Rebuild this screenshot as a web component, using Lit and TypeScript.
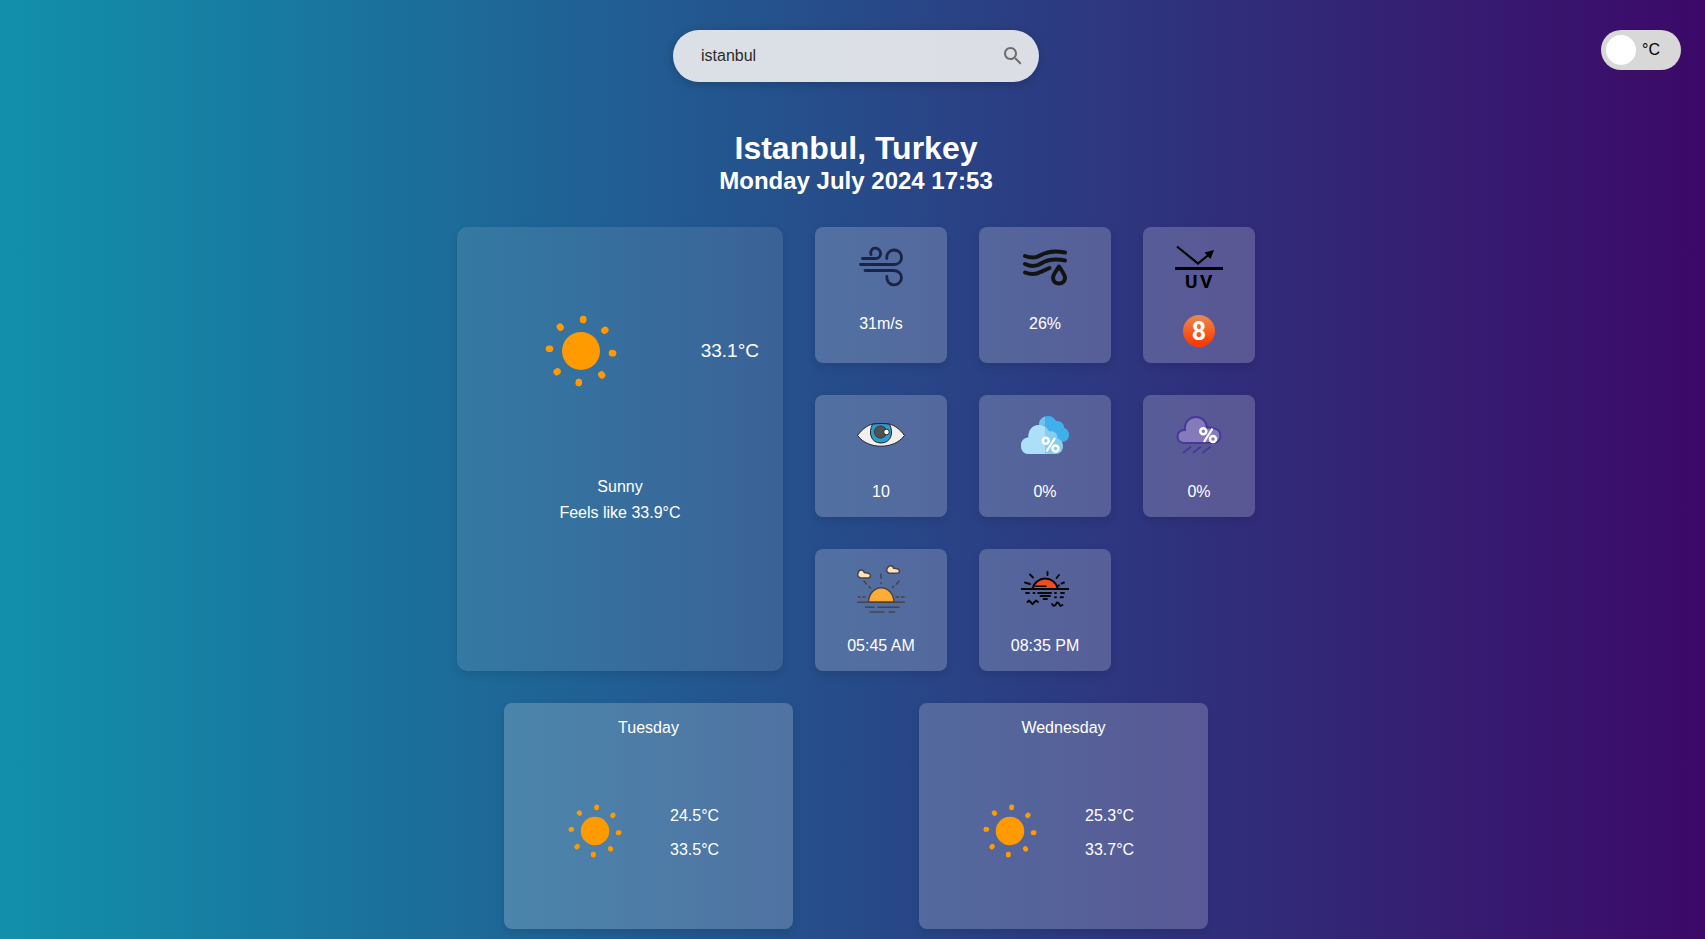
import { LitElement, html, svg, css } from "lit";
import { customElement, state } from "lit/decorators.js";

const degrees = (c: number, fahrenheit: boolean) =>
  fahrenheit ? `${(c * 1.8 + 32).toFixed(1)}°F` : `${c.toFixed(1)}°C`;

const rays = [4, 49, 94, 139, 184, 229, 274, 319];

const sun = html`<svg class="sun" viewBox="0 0 72 72" aria-hidden="true">
  <circle cx="36" cy="36" r="19" fill="#ff9a00" />
  ${rays.map(
    (a) => svg`<line x1="36" y1="3.900" x2="36" y2="4.900" transform="rotate(${a} 36 36)"
      stroke="#ff9a00" stroke-width="6.600" stroke-linecap="round" />`
  )}
</svg>`;

const wind = html`<svg viewBox="0 0 48 48" fill="none" stroke="#1b2346" stroke-width="2.800" stroke-linecap="round" aria-hidden="true">
  <path d="M5.500 15.500H18.500C25 15.500 25.500 6 18.500 5.200C15 5 13 8 14 11.500" />
  <path d="M3.500 21.500H37C41.500 21.500 44.500 18.500 44.500 14.500C44.500 10 41.200 7 37 7C32.500 7 29.500 10.500 29.800 15.500" />
  <path d="M8 27.500H37C41.500 27.500 44.500 31 44.500 34.500C44.500 38.500 41 41.800 37 41.800C32.500 41.800 29.500 38.500 29.800 33.500" />
</svg>`;

const humidity = html`<svg viewBox="0 0 48 48" fill="none" stroke="#131313" stroke-width="4" stroke-linecap="round" stroke-linejoin="round" aria-hidden="true">
  <path d="M4 13C9 15 14.500 15.500 20 12C27 8 34 7.300 44 9.500" />
  <path d="M4 21C9 23.500 14.500 24 20 20.500C27 16 34 15.300 44 17.500" />
  <path d="M4 29.500C9 31.500 14.500 32 20 28.800L28.500 25" />
  <path d="M38 23.500C35 28 32 31.500 32 34.800C32 38.300 34.600 40.500 38 40.500C41.400 40.500 44 38.300 44 34.800C44 31.500 41 28 38 23.500Z" />
</svg>`;

const uv = html`<svg viewBox="0 0 48 48" fill="none" stroke="#000" aria-hidden="true">
  <path d="M2 3.500L23 20.500L34 11.500" stroke-width="2.200" />
  <path d="M39 7L29.500 9.500L35.500 16Z" fill="#000" stroke="none" />
  <path d="M0 25.500H48" stroke-width="3" />
  <text class="uv-text" x="10" y="45">U</text>
  <text class="uv-text" x="25" y="45">V</text>
</svg>`;

const eye = html`<svg viewBox="0 0 48 48" stroke="#23262b" stroke-width="1" aria-hidden="true">
  <path d="M0.600 24.500C5 18 11 14 16 13C21 12.300 27 12.300 32 13C37 14 43 18 47.400 24.500C42 32 33 35.200 24 35.200C15 35.200 6 32 0.600 24.500Z" fill="#f3efef" />
  <path d="M15.500 13.200C11 22 14 32 24 32C34 32 37 22 32.500 13.200C27 12.300 21 12.300 15.500 13.200Z" fill="#2c9ccb" />
  <circle cx="23.500" cy="21" r="6.200" fill="#55504f" stroke-width="0.600" />
  <circle cx="29.500" cy="21" r="2.800" fill="#fff" />
</svg>`;

const percent = (x: number, y: number) => svg`<g transform="translate(${x} ${y})" fill="none" stroke="#fff">
  <circle cx="4.300" cy="4.300" r="3" stroke-width="2.500" />
  <circle cx="14" cy="12" r="3" stroke-width="2.500" />
  <path d="M13.500 1.500L5 15" stroke-width="2.200" />
</g>`;

const clouds = html`<svg viewBox="0 0 48 48" aria-hidden="true">
  <path d="M18 14C18 8.500 22 5 27 5C31 5 33.500 7 35 10C39.500 9.500 43.500 12.500 43.200 17C46.500 18 48 21 48 24C48 28 45 31 41 31H24Z" fill="#40b0ea" />
  <path d="M24 5.600C20.500 6.800 18 9.800 18 14H24Z" fill="#6fc3ee" />
  <path d="M8 43C3 43 0 39.500 0 34.500C0 30 3 27 7.500 26.500C7 19 11.500 14 18 14C23 14 26.500 16.500 28 20.500C33 19 37 22.500 36.500 27.500C40 28.500 42 31.500 42 35C42 40 39 43 34.500 43Z" fill="#87ccf1" />
  <path d="M8 43C3 43 0 39.500 0 34.500C0 30 3 27 7.500 26.500C7 19 11.500 14 18 14C20.500 14 22.500 14.600 24 15.600V43Z" fill="#acdff8" />
  ${percent(20.5, 25.5)}
</svg>`;

const rain = html`<svg viewBox="0 0 48 48" aria-hidden="true">
  <path d="M10 32C5 32 2.500 29 2.500 25.500C2.500 21.500 5.500 19 10 19C9 12 14 6 21 6C27 6 31.500 10.500 32 17C34 16 36 16.500 37.500 17.300C42.500 17.500 45.500 20.500 45.500 25C45.500 29 42.500 32 38 32Z" fill="#857bbb" stroke="#46379b" stroke-width="2" />
  <path d="M8.500 41.500L15.500 36M18.500 41.500L25.500 36M28 41.500L35 36" stroke="#46379b" stroke-width="1.800" stroke-linecap="round" />
  ${percent(24, 16)}
</svg>`;

const sunrise = html`<svg viewBox="0 0 48 48" fill="none" stroke="#454446" stroke-width="1.500" stroke-linecap="round" stroke-linejoin="round" aria-hidden="true">
  <path d="M11.500 37.300A12.700 14.500 0 0 1 37 37.300Z" fill="#fdad35" />
  <path d="M0.700 37.300H47.300M8.500 42.200H17M21 42.200H42M13 47H27M32 47H37.500" />
  <path d="M1.500 32H3M6 32H8M39 32H41.500M44.500 32H47M24 9V13M24 17.500V18.500M7 16L9.500 19M12 21.500L13.500 23M42 16L39.500 19M37 21L35.500 22.500" />
  <path d="M3.500 12.800C0.300 12.300 0 9 1.500 7.500C1.500 4.500 6 4 7.500 7.800C10 7.500 13.500 8.500 13.500 10.500C13.500 12 12.500 13 11 13Z" fill="#fee2bd" />
  <path d="M32.500 8.200C29.300 7.700 29 4.500 30.500 3C31.500 -0.200 36 0 36.500 3.200C39 3 42.500 4 42.500 6C42.500 7.500 41.500 8.300 40 8.300Z" fill="#fee2bd" />
</svg>`;

const sunset = html`<svg viewBox="0 0 48 48" fill="none" stroke="#080808" stroke-width="1.900" stroke-linecap="round" stroke-linejoin="round" aria-hidden="true">
  <path d="M11.500 24A13 13 0 0 1 37 24Z" fill="#f04d1e" />
  <path d="M0 24H48" stroke-width="2.200" stroke-linecap="butt" />
  <path d="M14.500 21.200H25" stroke-width="1.500" />
  <path d="M26.500 7V10M9 9.500L12 12.500M38 10L35.500 13M4 17.500L9 19M43 17.500L40.500 18.500M38 20.500H37.500" />
  <path d="M5 28H8M12.500 28H13.500M17 28H30M34 28H35M40 28H43M19.500 31H29M22.500 34H26M34 32.200H35M39.500 32.200H42" />
  <path d="M6.500 37L8 35.500L10 37.500L11.500 39.200L13.500 37L15 35.500L17 37M31 39L32.500 40.800L34.500 40L36 37.500L37.500 38L39.500 41L41.500 40" />
</svg>`;

const uvBadge = html`<svg class="uv-badge" viewBox="0 0 32 32" role="img" aria-label="UV index 8">
  <defs><linearGradient id="uvfill" x1="0" y1="0" x2="0" y2="1">
    <stop offset="0" stop-color="#e88b50" /><stop offset="0.900" stop-color="#ff3a00" />
  </linearGradient></defs>
  <circle cx="16" cy="16" r="16" fill="url(#uvfill)" />
  <text class="uv-index" x="16" y="25" text-anchor="middle">8</text>
</svg>`;

const stats = [
  { icon: wind, label: "31m/s" },
  { icon: humidity, label: "26%" },
  { icon: uv, label: uvBadge },
  { icon: eye, label: "10" },
  { icon: clouds, label: "0%" },
  { icon: rain, label: "0%" },
  { icon: sunrise, label: "05:45 AM" },
  { icon: sunset, label: "08:35 PM" },
];

const forecast = [
  { day: "Tuesday", low: 24.5, high: 33.5 },
  { day: "Wednesday", low: 25.3, high: 33.7 },
];

@customElement("app-root")
export class AppRoot extends LitElement {
  @state() private fahrenheit = false;

  static styles = css`
    :host {
      display: block;
      box-sizing: border-box;
      min-height: 100vh;
      padding: 30px 24px 10px 31px;
      background: linear-gradient(90deg, #1190ab 0%, #294486 55%, #3c0968 100%);
      color: #fff;
      font: 16px/24px "Liberation Sans", Arial, sans-serif;
    }
    * { box-sizing: border-box; margin: 0; }
    svg { display: block; overflow: visible; }
    .top {
      display: grid;
      grid-template-columns: 1fr 366px 1fr;
      align-items: start;
    }
    .search {
      grid-column: 2;
      display: flex;
      align-items: center;
      height: 52px;
      padding: 0 14px 0 28px;
      border-radius: 26px;
      background: rgba(240, 240, 240, 0.9);
      box-shadow: 0 2px 10px rgba(0, 0, 0, 0.2);
    }
    .search input {
      flex: 1;
      min-width: 0;
      padding: 0;
      border: 0;
      outline: 0;
      background: none;
      color: #2b2b2b;
      font: inherit;
    }
    .search button {
      display: block;
      padding: 0;
      border: 0;
      background: none;
      color: #6d6d6f;
    }
    .search svg { width: 24px; height: 24px; }
    .unit {
      justify-self: end;
      display: flex;
      align-items: center;
      gap: 6px;
      width: 80px;
      height: 40px;
      padding: 0 5px;
      border-radius: 20px;
      background: #d8d8d8;
      color: #000;
      line-height: 40px;
    }
    .unit input {
      appearance: none;
      flex: none;
      width: 30px;
      height: 30px;
      border-radius: 50%;
      background: #fff;
    }
    .unit input:checked { order: 2; }
    main {
      display: flex;
      flex-direction: column;
      align-items: center;
    }
    h1 { margin-top: 48px; font-size: 32px; line-height: 36px; }
    h2 { font-size: 24px; line-height: 30px; }
    .today {
      display: grid;
      grid-template-columns: 326px 132px 132px 112px;
      grid-template-rows: 136px 122px 122px;
      gap: 32px;
      margin-top: 31px;
    }
    .card {
      border-radius: 8px;
      background: rgba(255, 255, 255, 0.2);
      box-shadow: 0 4px 8px rgba(0, 0, 0, 0.1);
    }
    .now {
      grid-row: span 3;
      display: flex;
      flex-direction: column;
      padding: 88px 24px 0;
      border-radius: 10px;
      background: rgba(255, 255, 255, 0.1);
      text-align: center;
    }
    .reading {
      display: flex;
      align-items: center;
      justify-content: space-between;
      padding-left: 64px;
      margin-bottom: 87px;
      font-size: 19px;
    }
    .now .sun { width: 72px; height: 72px; }
    .now p { line-height: 26px; }
    .stat {
      display: flex;
      flex-direction: column;
      align-items: center;
      gap: 20px;
      padding-top: 16px;
      line-height: 26px;
    }
    .stat svg { width: 48px; height: 48px; }
    .stat .uv-badge { width: 32px; height: 32px; margin-top: 4px; }
    .uv-text { fill: #000; stroke: none; font: bold 19px Roboto, sans-serif; }
    .uv-index { fill: #fff; font: bold 25px Roboto, sans-serif; }
    .days {
      display: flex;
      justify-content: space-around;
      width: 830px;
      margin-top: 32px;
    }
    .day {
      width: 289px;
      height: 226px;
      padding-top: 12px;
    }
    .day h3 {
      font-size: 16px;
      font-weight: 400;
      line-height: 26px;
      text-align: center;
    }
    .range {
      display: grid;
      grid-template-columns: 54px 1fr;
      column-gap: 48px;
      align-items: start;
      padding: 58px 0 0 64px;
    }
    .day .sun { width: 54px; height: 54px; margin-top: 5px; }
    .range p { line-height: 34px; }
  `;

  render() {
    return html`
      <header class="top">
        <form class="search" role="search" @submit=${(e: Event) => e.preventDefault()}>
          <input type="text" aria-label="City" .value=${"istanbul"} />
          <button type="submit" aria-label="Search">
            <svg viewBox="0 0 24 24" fill="currentColor"><path d="M15.500 14h-.790l-.280-.270C15.410 12.590 16 11.110 16 9.500 16 5.910 13.090 3 9.500 3S3 5.910 3 9.500 5.910 16 9.500 16c1.610 0 3.090-.590 4.230-1.570l.270.280v.790l5 4.990L20.490 19zm-6 0C7.010 14 5 11.990 5 9.500S7.010 5 9.500 5 14 7.010 14 9.500 11.990 14 9.500 14"/></svg>
          </button>
        </form>
        <label class="unit">
          <input type="checkbox" .checked=${this.fahrenheit}
            @change=${() => (this.fahrenheit = !this.fahrenheit)} />
          <span>${this.fahrenheit ? "°F" : "°C"}</span>
        </label>
      </header>
      <main>
        <h1>Istanbul, Turkey</h1>
        <h2>Monday July 2024 17:53</h2>
        <section class="today">
          <article class="card now">
            <div class="reading">${sun}<span>${degrees(33.1, this.fahrenheit)}</span></div>
            <p>Sunny</p>
            <p>Feels like ${degrees(33.9, this.fahrenheit)}</p>
          </article>
          ${stats.map((s) => html`<article class="card stat">${s.icon}<div>${s.label}</div></article>`)}
        </section>
        <section class="days">
          ${forecast.map(
            (f) => html`<article class="card day">
              <h3>${f.day}</h3>
              <div class="range">
                ${sun}
                <div>
                  <p>${degrees(f.low, this.fahrenheit)}</p>
                  <p>${degrees(f.high, this.fahrenheit)}</p>
                </div>
              </div>
            </article>`
          )}
        </section>
      </main>
    `;
  }
}
